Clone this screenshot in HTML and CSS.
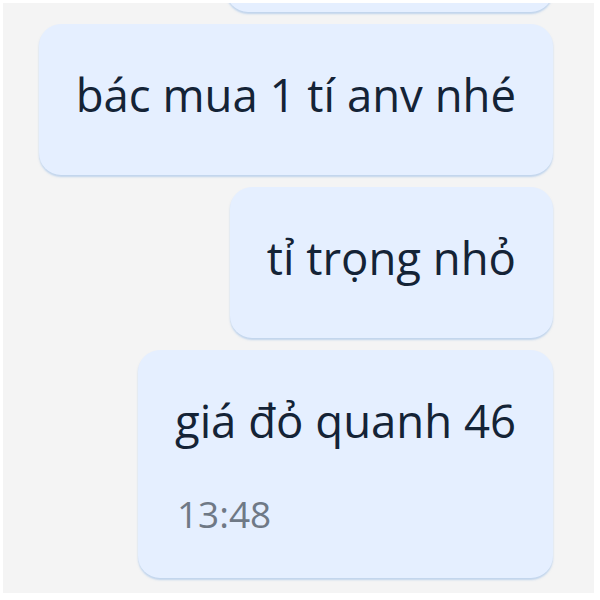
FILE: index.html
```html
<!DOCTYPE html>
<html lang="vi">
<head>
<meta charset="utf-8">
<title>Chat</title>
<link rel="stylesheet" href="styles.css">
</head>
<body>
<div class="frame">
  <div class="thread">
    <div class="bubble bubble-clipped"></div>
    <div class="bubble">
      <div class="msg">bác mua 1 tí anv nhé</div>
    </div>
    <div class="bubble">
      <div class="msg">tỉ trọng nhỏ</div>
    </div>
    <div class="bubble">
      <div class="msg">giá đỏ quanh 46</div>
      <div class="time">13:48</div>
    </div>
  </div>
</div>
</body>
</html>
```
FILE: styles.css
```css
html, body {
  margin: 0;
  padding: 0;
  background: #ffffff;
}

.frame {
  margin: 3px 6px 7px 3px;
  height: 590px;
  background: #f4f4f4;
  overflow: hidden;
  display: flex;
  flex-direction: column;
  justify-content: flex-end;
}

.thread {
  display: flex;
  flex-direction: column;
  align-items: flex-end;
  gap: 12px;
  padding: 0 41px 15px 0;
}

.bubble {
  flex: none;
  background: #e5efff;
  border-radius: 22px;
  padding: 41px 37px 40px;
  box-shadow: 0 2px 2px rgba(150, 185, 230, 0.55);
  font-family: "Open Sans", "Noto Sans", sans-serif;
}

.bubble-clipped {
  width: 253px;
  height: 73px;
  padding-top: 0;
  padding-bottom: 0;
}

.msg {
  font-size: 45.5px;
  line-height: 58px;
  color: #142336;
  padding-bottom: 12px;
  white-space: nowrap;
}

.time {
  margin-top: 29px;
  padding-left: 2px;
  font-size: 37px;
  line-height: 48px;
  color: #6f7986;
}
```
